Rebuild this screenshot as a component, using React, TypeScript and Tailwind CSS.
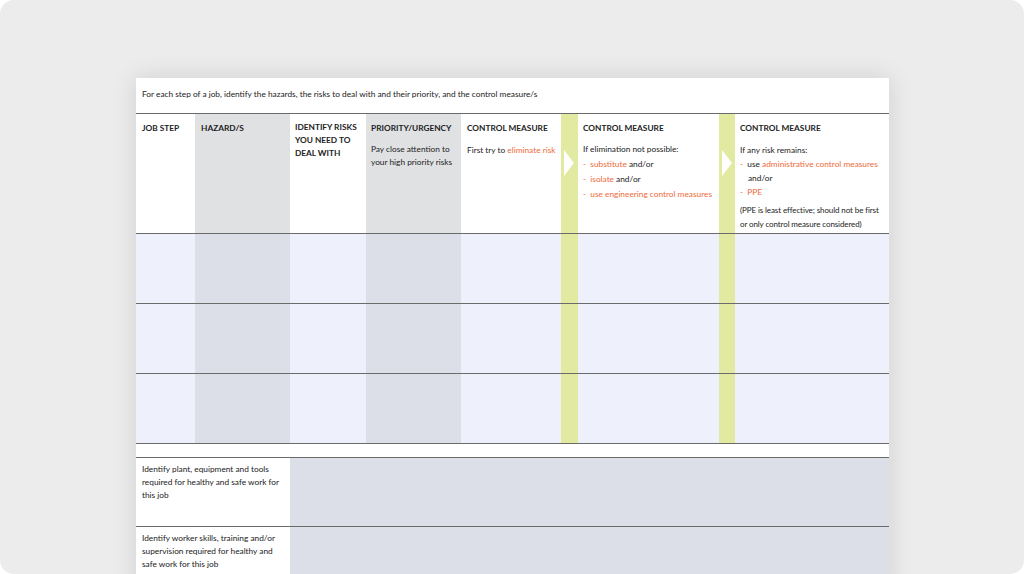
const cols = "grid grid-cols-[59px_95px_76px_95px_100px_17px_141px_16px_154px]";
const O = "text-[#ef6a3a]";

function Arrow() {
  return (
    <svg width="10" height="26" viewBox="0 0 10 26" className="mt-[36px] ml-[3px]">
      <polygon points="0,0 10,13 0,26" fill="#ffffff" />
    </svg>
  );
}

function BodyRow() {
  const L = "bg-[#eef0fb]";
  const G = "bg-[#dcdee8]";
  const Y = "bg-[#e1eaa0]";
  return (
    <div className={`${cols} h-[70px] border-b border-[#6b6b6b]`}>
      <div className={L} />
      <div className={G} />
      <div className={L} />
      <div className={G} />
      <div className={L} />
      <div className={Y} />
      <div className={L} />
      <div className={Y} />
      <div className={L} />
    </div>
  );
}

export default function App() {
  return (
    <div className="w-[1024px] h-[574px] bg-white overflow-hidden">
      <div className="w-full h-full bg-[#ececec] rounded-[14px] pt-[78px] pl-[136px] overflow-hidden">
        <div
          className="w-[753px] bg-white shadow-[0_0_24px_rgba(0,0,0,0.12)] text-[#222] leading-[14px]"
          style={{ fontFamily: "Lato, 'Open Sans', sans-serif" }}
        >
          <div className="h-[36px] border-b border-[#6b6b6b] pl-[6px] pt-[9px] text-[8.3px]">
            For each step of a job, identify the hazards, the risks to deal with and their priority, and the control measure/s
          </div>
          <div className={`${cols} h-[120px] border-b border-[#6b6b6b] text-[8.3px]`}>
            <div className="px-[6px] pt-[7px] font-bold">JOB STEP</div>
            <div className="bg-[#e0e1e3] px-[6px] pt-[7px] font-bold">HAZARD/S</div>
            <div className="px-[5px] pt-[7px] font-bold leading-[13px]">IDENTIFY RISKS<br />YOU NEED TO<br />DEAL WITH</div>
            <div className="bg-[#e0e1e3] px-[5px] pt-[7px]">
              <div className="font-bold">PRIORITY/URGENCY</div>
              <div className="mt-[8px] leading-[13px]">Pay close attention to your high priority risks</div>
            </div>
            <div className="pl-[6px] pt-[7px]">
              <div className="font-bold">CONTROL MEASURE</div>
              <div className="mt-[8px] whitespace-nowrap">First try to <span className={O}>eliminate risk</span></div>
            </div>
            <div className="bg-[#e1eaa0]"><Arrow /></div>
            <div className="px-[5px] pt-[7px] leading-[15px]">
              <div className="font-bold leading-[14px]">CONTROL MEASURE</div>
              <div className="mt-[7px]">If elimination not possible:</div>
              <div><span className={O}>-&nbsp; substitute</span> and/or</div>
              <div><span className={O}>-&nbsp; isolate</span> and/or</div>
              <div className={O}>-&nbsp; use engineering control measures</div>
            </div>
            <div className="bg-[#e1eaa0]"><Arrow /></div>
            <div className="pl-[5px] pt-[7px] leading-[14px]">
              <div className="font-bold">CONTROL MEASURE</div>
              <div className="mt-[8px]">If any risk remains:</div>
              <div><span className={O}>-</span>&nbsp; use <span className={O}>administrative control measures</span></div>
              <div className="pl-[8px]">and/or</div>
              <div className={O}>-&nbsp; PPE</div>
              <div className="mt-[4px] whitespace-nowrap text-[8px] tracking-[-0.1px]">(PPE is least effective; should not be first<br />or only control measure considered)</div>
            </div>
          </div>
          <BodyRow />
          <BodyRow />
          <BodyRow />
          <div className="h-[14px] border-b border-[#6b6b6b]" />
          <div className="grid grid-cols-[154px_599px] h-[69px] border-b border-[#6b6b6b] text-[8.3px] leading-[13px]">
            <div className="px-[6px] pt-[5px]">Identify plant, equipment and tools required for healthy and safe work for this job</div>
            <div className="bg-[#dcdee8]" />
          </div>
          <div className="grid grid-cols-[154px_599px] h-[69px] text-[8.3px] leading-[13px]">
            <div className="px-[6px] pt-[5px]">Identify worker skills, training and/or supervision required for healthy and safe work for this job</div>
            <div className="bg-[#dcdee8]" />
          </div>
        </div>
      </div>
    </div>
  );
}
